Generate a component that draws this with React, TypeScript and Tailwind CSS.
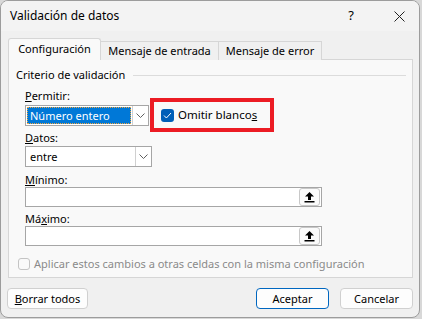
import React from 'react';

const font = { fontFamily: '"Segoe UI", "Noto Sans", sans-serif' };

const Chevron = () => (
  <svg width="9" height="5" viewBox="0 0 9 5" fill="none">
    <path d="M0.5 0.5 L4.5 4.5 L8.5 0.5" stroke="#606060" strokeWidth="1" />
  </svg>
);

const UpArrow = () => (
  <svg width="11" height="12" viewBox="0 0 11 12">
    <path d="M5.5 1 L10 5.5 L7 5.5 L7 9 L4 9 L4 5.5 L1 5.5 Z" fill="#000" />
    <rect x="0.5" y="10" width="10" height="1.5" fill="#000" />
  </svg>
);

const Label = ({ children, className = '' }: { children: React.ReactNode; className?: string }) => (
  <div className={`h-[14px] leading-[14px] text-black whitespace-nowrap ${className}`}>{children}</div>
);

const RefInput = ({ className = '' }: { className?: string }) => (
  <div className={`w-[297px] h-[20px] bg-white border border-[#a6a6a6] flex items-center justify-end pr-[1px] ${className}`}>
    <div className="w-[21px] h-[18px] rounded-[3px] border border-[#c8c8c8] bg-[#fbfbfb] flex items-center justify-center">
      <UpArrow />
    </div>
  </div>
);

export default function App() {
  return (
    <div className="w-[422px] h-[319px] bg-[#d8d8d8] text-[11px]" style={font}>
      <div className="w-[420px] h-[318px] rounded-[8px] border border-[#9c9c9c] bg-[#f0f0f0] overflow-hidden flex flex-col">
        {/* title bar */}
        <div className="h-[30px] bg-[#f3f3f3] flex items-center pl-[9px] text-[12px] text-black">
          <span>Validación de datos</span>
          <span className="ml-auto mr-[40px] text-[13px]">?</span>
          <svg width="11" height="11" viewBox="0 0 11 11" className="mr-[14px]">
            <path d="M0.5 0.5 L10.5 10.5 M10.5 0.5 L0.5 10.5" stroke="#222" strokeWidth="1" />
          </svg>
        </div>

        {/* tabs */}
        <div className="pt-[7px] px-[7px]">
          <div className="flex items-end h-[22px] relative z-10 whitespace-nowrap">
            <div className="h-[22px] w-[93px] bg-[#f9f9f9] border border-b-0 border-[#d6d6d6] rounded-t-[3px] flex items-center justify-center pb-[1px] text-black">
              Configuración
            </div>
            <div className="h-[19px] w-[118px] bg-[#f0f0f0] border border-l-0 border-b-0 border-[#d6d6d6] flex items-center justify-center text-black">
              Mensaje de entrada
            </div>
            <div className="h-[19px] w-[103px] bg-[#f0f0f0] border border-l-0 border-b-0 border-[#d6d6d6] flex items-center justify-center text-black">
              Mensaje de error
            </div>
          </div>

          {/* panel */}
          <div className="-mt-[1px] w-[405px] h-[219px] bg-[#f9f9f9] border border-[#d6d6d6] pl-[7px] flex flex-col">
            <div className="flex items-center mt-[8px] h-[14px] pr-[6px]">
              <span className="text-black leading-[14px] whitespace-nowrap">Criterio de validación</span>
              <div className="ml-[8px] flex-1 h-px bg-[#dcdcdc]" />
            </div>

            <div className="pl-[9px] flex flex-col">
              <Label className="mt-[7px]"><u>P</u>ermitir:</Label>
              <div className="flex mt-[2px] h-[21px]">
                <div className="w-[124px] h-[21px] bg-white border border-[#a6a6a6] flex items-stretch">
                  <div className="flex-1 m-[1px] bg-[#0078d7] border border-dotted border-[#f0a640] text-white leading-[15px] pl-[2px] whitespace-nowrap">
                    Número entero
                  </div>
                  <div className="w-[16px] border-l border-[#d0d0d0] flex items-center justify-center">
                    <Chevron />
                  </div>
                </div>
                <div className="ml-[1px] -mt-[7px] h-[34px] w-[124px] border-[4px] border-[#ec1c24] flex items-center pl-[7px]">
                  <div className="w-[13px] h-[13px] rounded-[3px] bg-[#005fb8] flex items-center justify-center">
                    <svg width="9" height="7" viewBox="0 0 9 7">
                      <path d="M1 3.5 L3.4 6 L8 1" stroke="#fff" strokeWidth="1" fill="none" />
                    </svg>
                  </div>
                  <span className="ml-[4px] text-black whitespace-nowrap text-[11.5px]">Omitir blanco<u>s</u></span>
                </div>
              </div>

              <Label className="mt-[5px]"><u>D</u>atos:</Label>
              <div className="mt-[1px] w-[127px] h-[21px] bg-white border border-[#a6a6a6] flex items-stretch">
                <div className="flex-1 leading-[19px] pl-[4px] text-black">entre</div>
                <div className="w-[16px] border-l border-[#d0d0d0] flex items-center justify-center">
                  <Chevron />
                </div>
              </div>

              <Label className="mt-[6px]"><u>M</u>ínimo:</Label>
              <RefInput />

              <Label className="mt-[5px]">Má<u>x</u>imo:</Label>
              <RefInput />

              <div className="flex items-center mt-[11px] -ml-[9px] pl-[2px]">
                <div className="w-[12px] h-[12px] rounded-[3px] border border-[#c4c4c4] bg-[#f9f9f9]" />
                <span className="ml-[4px] text-[#8a8a8a] leading-[14px] whitespace-nowrap">
                  Aplicar estos cambios a otras celdas con la misma configuración
                </span>
              </div>
            </div>
          </div>
        </div>

        {/* buttons */}
        <div className="flex mt-[10px] px-[6px]">
          <button className="w-[81px] h-[21px] rounded-[4px] border border-[#d0d0d0] bg-[#fdfdfd] text-black leading-[19px]">
            <u>B</u>orrar todos
          </button>
          <button className="ml-auto w-[73px] h-[21px] rounded-[4px] border border-[#0067c0] bg-[#fdfdfd] text-black leading-[19px]">
            Aceptar
          </button>
          <button className="ml-[11px] w-[73px] h-[21px] rounded-[4px] border border-[#d0d0d0] bg-[#fdfdfd] text-black leading-[19px]">
            Cancelar
          </button>
        </div>
      </div>
    </div>
  );
}
